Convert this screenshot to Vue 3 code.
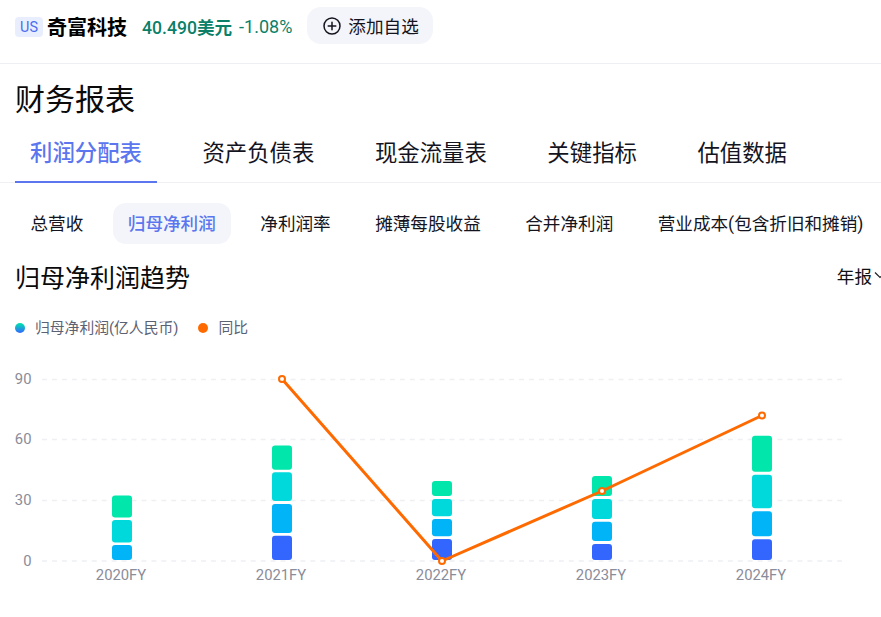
<script setup>
const tabs = ['利润分配表', '资产负债表', '现金流量表', '关键指标', '估值数据']
const subs = ['总营收', '归母净利润', '净利润率', '摊薄每股收益', '合并净利润', '营业成本(包含折旧和摊销)']
const colors = ['#00e6ab', '#00d9dc', '#00b4f7', '#3366ff']
const grid = [{ y: 379.5, t: '90' }, { y: 439.5, t: '60' }, { y: 500.5, t: '30' }, { y: 561, t: '0' }]
const cols = [
  { x: 112, label: '2020FY', segs: [[495.5, 517.5, 0], [520, 542.5, 1], [545, 560, 2]] },
  { x: 272, label: '2021FY', segs: [[445.5, 469.7, 0], [472.3, 501, 1], [504, 533, 2], [535.7, 560, 3]] },
  { x: 432, label: '2022FY', segs: [[481, 496, 0], [499, 516.3, 1], [519, 536.3, 2], [539, 560, 3]] },
  { x: 592, label: '2023FY', segs: [[476, 496, 0], [499, 519, 1], [521.7, 541, 2], [544, 560, 3]] },
  { x: 752, label: '2024FY', segs: [[435.7, 471.7, 0], [474.7, 508.3, 1], [511.3, 536.3, 2], [539.3, 560, 3]] }
]
const pts = [[282, 379], [442, 561], [602, 491], [762, 415.5]]
const line = pts.map(p => p.join(',')).join(' ')
</script>

<template>
  <div class="page">
    <header class="top">
      <span class="badge">US</span>
      <span class="name">奇富科技</span>
      <span class="price">40.490<b>美元</b></span>
      <span class="pct">-1.08%</span>
      <button class="add">
        <svg width="18" height="18" viewBox="0 0 18 18" fill="none" stroke="#14141e" stroke-width="1.5">
          <circle cx="9" cy="9" r="8" />
          <path d="M9 5.2v7.6M5.2 9h7.6" stroke-linecap="round" />
        </svg>
        添加自选
      </button>
    </header>

    <h1 class="title">财务报表</h1>

    <nav class="tabs">
      <span v-for="(t, i) in tabs" :key="t" class="tab" :class="{ on: i === 0 }">{{ t }}</span>
    </nav>

    <nav class="subs">
      <span v-for="(s, i) in subs" :key="s" class="sub" :class="{ on: i === 1 }">{{ s }}</span>
    </nav>

    <div class="head">
      <h2 class="h2">归母净利润趋势</h2>
      <span class="period">
        年报
        <svg width="12" height="8" viewBox="0 0 12 8" fill="none" stroke="#222" stroke-width="1.2"><path d="M1 1.5l5 5 5-5" /></svg>
      </span>
    </div>

    <div class="legend">
      <span class="item"><i class="dot grad"></i>归母净利润(亿人民币)</span>
      <span class="item"><i class="dot orange"></i>同比</span>
    </div>

    <svg class="chart" width="881" height="260" viewBox="0 350 881 260">
      <g v-for="g in grid" :key="g.t">
        <line x1="42" x2="842" :y1="g.y" :y2="g.y" stroke="#eef0f3" stroke-width="1.5" stroke-dasharray="5 4.94" />
        <text x="31.5" :y="g.y + 4.5" text-anchor="end" class="axis">{{ g.t }}</text>
      </g>
      <g v-for="c in cols" :key="c.label">
        <rect v-for="s in c.segs" :key="s[0]" :x="c.x" :y="s[0]" width="20" :height="s[1] - s[0]" rx="3" :fill="colors[s[2]]" />
        <text :x="c.x + 9" y="580" text-anchor="middle" class="axis">{{ c.label }}</text>
      </g>
      <polyline :points="line" fill="none" stroke="#ff6a00" stroke-width="3" stroke-linejoin="round" />
      <circle v-for="p in pts" :key="p[0]" :cx="p[0]" :cy="p[1]" r="3" fill="#fff" stroke="#ff6a00" stroke-width="2" />
    </svg>
  </div>
</template>

<style>
html, body { margin: 0; background: #fff; }
</style>

<style scoped>
.page {
  width: 881px;
  height: 617px;
  overflow: hidden;
  font-family: "Roboto", "Noto Sans CJK SC", sans-serif;
  color: #14141e;
}
.top {
  display: flex;
  align-items: center;
  height: 53px;
  padding: 0 15px 10px;
  border-bottom: 1px solid #eeeff2;
}
.badge {
  width: 28px;
  height: 20px;
  line-height: 21px;
  text-align: center;
  background: #e9eefe;
  color: #4a6cf0;
  border-radius: 4px;
  font-size: 14.4px;
}
.name { margin-left: 4px; font-size: 20px; font-weight: 700; color: #000; }
.price { margin-left: 15px; font-size: 17.6px; font-weight: 500; color: #0b7f68; }
.price b { font-weight: 700; }
.pct { margin-left: 7px; font-size: 18px; color: #0b7f68; }
.add {
  display: flex;
  align-items: center;
  gap: 7px;
  margin-left: 15px;
  align-self: flex-start;
  margin-top: 7px;
  width: 126px;
  height: 37px;
  padding: 0 0 0 16px;
  border: 0;
  border-radius: 14px;
  background: #f4f5fa;
  font: inherit;
  font-size: 17.6px;
  color: #14141e;
}
.title {
  margin: 0;
  padding: 16px 15px 1px;
  font-size: 30px;
  font-weight: 400;
  line-height: 40px;
  color: #0a0a0a;
}
.tabs {
  display: flex;
  gap: 30px;
  padding-left: 15px;
  box-sizing: border-box;
  height: 62px;
  border-bottom: 1px solid #f0f1f4;
}
.tab {
  display: flex;
  align-items: center;
  box-sizing: border-box;
  flex: none;
  height: 62px;
  padding: 0 15.5px 0 15px;
  font-size: 22.4px;
  color: #14141e;
  border-bottom: 2px solid transparent;
}
.tab.on {
  color: #5b76ee;
  font-weight: 500;
  border-bottom-color: #5b76ee;
}
.subs {
  display: flex;
  gap: 14.5px;
  margin-top: 20px;
  padding-left: 15.5px;
  white-space: nowrap;
}
.sub {
  height: 41px;
  line-height: 43px;
  padding: 0 15px;
  font-size: 17.6px;
  color: #14141e;
}
.sub.on {
  background: #f4f5fa;
  border-radius: 13px;
  color: #5b76ee;
  font-weight: 500;
}
.head {
  display: flex;
  justify-content: space-between;
  align-items: center;
  width: 871px;
  padding-left: 15px;
  margin-top: 11px;
  height: 42px;
}
.h2 { margin: 0; font-size: 25px; font-weight: 400; color: #0a0a0a; }
.period {
  display: flex;
  align-items: center;
  gap: 2px;
  font-size: 17.6px;
  margin-bottom: 2px;
  color: #111;
}
.legend {
  display: flex;
  gap: 20px;
  padding-left: 15px;
  margin-top: 21px;
  height: 20px;
  font-size: 14.8px;
  line-height: 20px;
  color: #5b6274;
}
.item { display: flex; align-items: center; gap: 10px; }
.dot { width: 10px; height: 10px; border-radius: 50%; display: block; }
.dot.grad { background: linear-gradient(#00e6ab, #3366ff); }
.dot.orange { background: #ff6a00; }
.chart { display: block; margin-top: 12px; }
.axis { font-size: 14.8px; fill: #8a8c99; font-family: "Roboto", sans-serif; }
</style>
